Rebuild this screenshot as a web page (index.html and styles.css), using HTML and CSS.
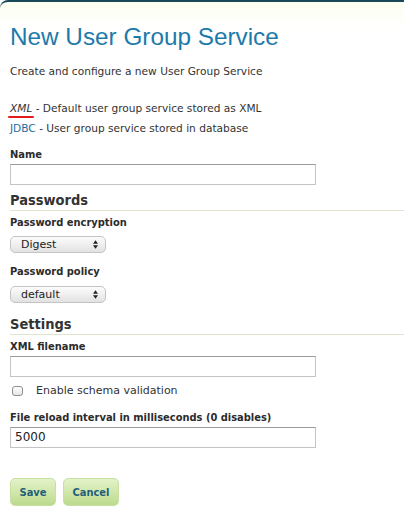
FILE: index.html
```html
<!DOCTYPE html>
<html>
<head>
<meta charset="utf-8">
<link rel="stylesheet" href="styles.css">
</head>
<body>
<div class="page">
  <h1 class="title">New User Group Service</h1>
  <p class="intro">Create and configure a new User Group Service</p>
  <ul class="types">
    <li><span class="xml">XML</span> - Default user group service stored as XML</li>
    <li><a class="link">JDBC</a> - User group service stored in database</li>
  </ul>
  <div class="field first">
    <label class="lbl">Name</label>
    <div class="input"></div>
  </div>
  <h2 class="section s1">Passwords</h2>
  <div class="field after-section">
    <label class="lbl">Password encryption</label>
    <div class="select"><span>Digest</span><span class="arrows"><svg width="5" height="9" viewBox="0 0 6 10"><path d="M0 4 L3 0 L6 4 Z M0 6 L3 10 L6 6 Z" fill="#222"/></svg></span></div>
  </div>
  <div class="field after-select">
    <label class="lbl">Password policy</label>
    <div class="select"><span>default</span><span class="arrows"><svg width="5" height="9" viewBox="0 0 6 10"><path d="M0 4 L3 0 L6 4 Z M0 6 L3 10 L6 6 Z" fill="#222"/></svg></span></div>
  </div>
  <h2 class="section s2">Settings</h2>
  <div class="field after-section">
    <label class="lbl">XML filename</label>
    <div class="input"></div>
  </div>
  <div class="check"><span class="box"></span><span>Enable schema validation</span></div>
  <div class="field after-check">
    <label class="lbl">File reload interval in milliseconds (0 disables)</label>
    <div class="input">5000</div>
  </div>
  <div class="buttons">
    <button class="btn save">Save</button>
    <button class="btn cancel">Cancel</button>
  </div>
</div>
</body>
</html>
```
FILE: styles.css
```css
html, body { margin: 0; padding: 0; background: #fff; }
body { font-family: "DejaVu Sans", Verdana, sans-serif; color: #333; }
.page {
  width: 404px; height: 511px; box-sizing: border-box;
  border-top: 2px solid #19475a; border-top-left-radius: 8px;
  background: linear-gradient(#fcfdf0, #fff 28px);
  padding: 0 0 0 10px; overflow: hidden;
}
.title {
  margin: 21px 0 0 0; font-family: "Liberation Sans", Arial, sans-serif;
  font-weight: normal; font-size: 24.3px; line-height: 28px; color: #1d7aa9;
}
.intro { margin: 13px 0 0 0; font-size: 10.6px; line-height: 14px; color: #333; }
.types { list-style: none; margin: 20px 0 0 0; padding: 0; font-size: 10.6px; line-height: 20px; }
.xml { font-style: italic; position: relative; }
.xml::after { content: ""; position: absolute; left: -2px; right: -2px; bottom: -4px; height: 2px; background: #e21b1b; border-radius: 1px; }
.link { color: #1a6ea0; }
.field { display: flex; flex-direction: column; }
.lbl {
  font-family: "DejaVu Sans Condensed", "DejaVu Sans", sans-serif;
  font-weight: bold; font-size: 11px; line-height: 14px; color: #2b2b2b;
}
.first { margin-top: 10px; }
.after-section { margin-top: 5px; }
.after-select { margin-top: 12px; }
.after-check { margin-top: 14px; }
.input {
  margin-top: 2px; width: 306px; height: 21px; box-sizing: border-box;
  border: 1px solid #c4c4c4; border-top-color: #9a9a9a; font-size: 12px;
  padding: 2px 4px; line-height: 15px; background: #fff; color: #222;
}
.select {
  width: 96px; height: 17px; box-sizing: border-box;
  border: 1px solid #c4c4c4; border-radius: 5px;
  background: linear-gradient(#fcfcfc, #e2e2e2);
  display: flex; align-items: center; justify-content: space-between;
  padding: 0 7px 0 10px; font-size: 11px; color: #222;
}
.field .select { margin-top: 6px; }
.after-select .select { margin-top: 7px; }
.arrows { display: flex; align-items: center; height: 100%; }
.section {
  margin: 0; font-family: "DejaVu Sans Condensed", "DejaVu Sans", sans-serif;
  font-size: 14.5px; line-height: 18px; font-weight: bold;
  color: #333; padding-bottom: 1px; border-bottom: 1px solid #dde6cc;
}
.s1 { margin-top: 6px; }
.s2 { margin-top: 12px; }
.check { display: flex; align-items: center; gap: 13px; margin-top: 8px; font-size: 11px; line-height: 12px; padding-left: 2px; }
.box { width: 11px; height: 10px; box-sizing: border-box; border: 1px solid #8e8e8e; border-radius: 3px; background: linear-gradient(#fff, #e6e6e6); }
.buttons { display: flex; gap: 7px; margin-top: 30px; }
.btn {
  font-family: "DejaVu Sans Condensed", "DejaVu Sans", sans-serif; font-weight: bold; font-size: 11px;
  color: #1f5f79; height: 28px; padding: 0; border: 1px solid #c8dfa2;
  border-radius: 5px; background: linear-gradient(#e4f2c9, #bcdb8d);
}
.save { width: 46px; }
.cancel { width: 56px; }
```
